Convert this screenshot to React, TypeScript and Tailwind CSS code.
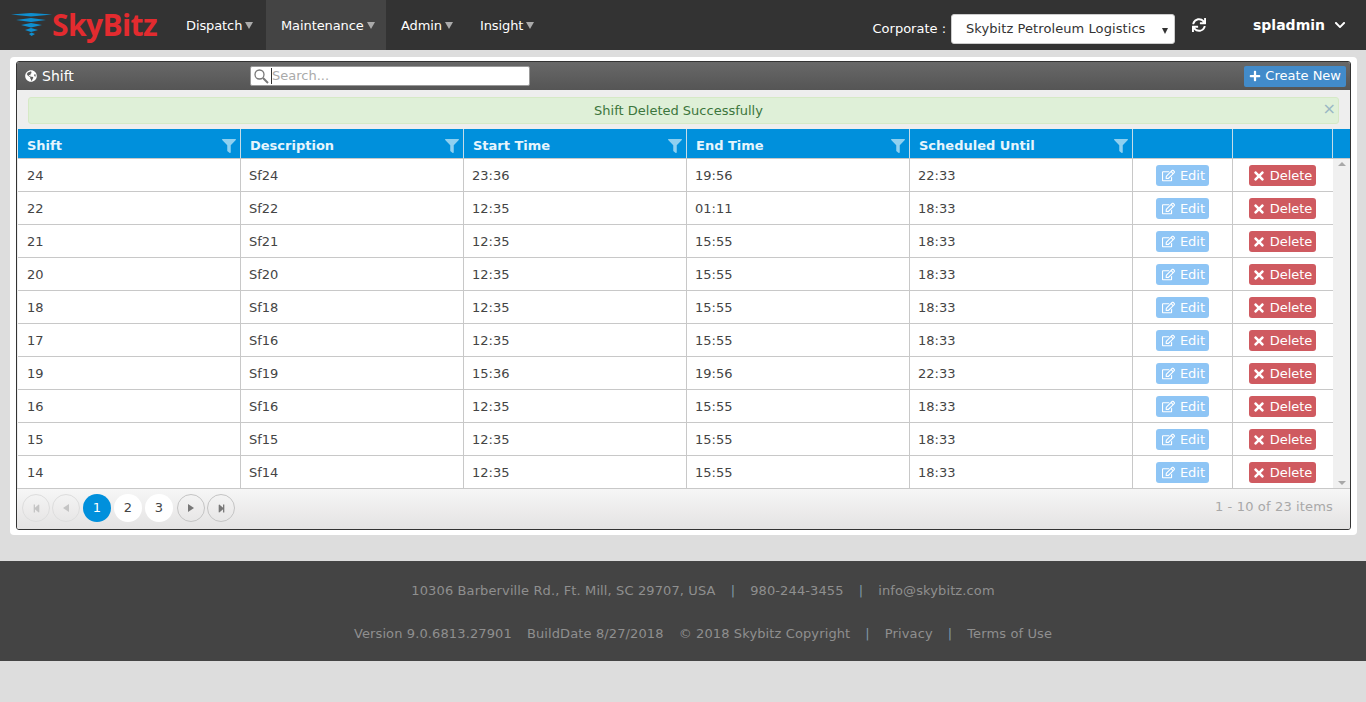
import {
  FaChevronDown,
  FaFilter,
  FaGlobeAmericas,
  FaPlus,
  FaRegEdit,
  FaStepBackward,
  FaStepForward,
  FaSync,
  FaTimes,
} from "react-icons/fa";

const NAV = ["Dispatch", "Maintenance", "Admin", "Insight"];
const HEADERS = ["Shift", "Description", "Start Time", "End Time", "Scheduled Until"];
const ROWS = [
  ["24", "Sf24", "23:36", "19:56", "22:33"],
  ["22", "Sf22", "12:35", "01:11", "18:33"],
  ["21", "Sf21", "12:35", "15:55", "18:33"],
  ["20", "Sf20", "12:35", "15:55", "18:33"],
  ["18", "Sf18", "12:35", "15:55", "18:33"],
  ["17", "Sf16", "12:35", "15:55", "18:33"],
  ["19", "Sf19", "15:36", "19:56", "22:33"],
  ["16", "Sf16", "12:35", "15:55", "18:33"],
  ["15", "Sf15", "12:35", "15:55", "18:33"],
  ["14", "Sf14", "12:35", "15:55", "18:33"],
];

function Logo() {
  return (
    <div className="flex w-[174px] items-center pl-[11px]">
      <svg width="42" height="24" viewBox="0 0 42 24" className="mr-[-1px]">
        <path d="M0 1.5 L20 0 L41 1.5 L20 3.5 Z" fill="#0f8fd0" />
        <path d="M5 7 L20 5 L35 7 L20 9 Z" fill="#0f8fd0" />
        <path d="M10 12 L20 10 L31 12 L20 14.5 Z" fill="#0f8fd0" />
        <path d="M14 17 L20 15 L27 17 L20 19 Z" fill="#0f8fd0" />
        <path d="M18 21 L20.500 19.500 L24 21 L20.500 23 Z" fill="#0f8fd0" />
      </svg>
      <span className="font-['Open_Sans'] text-[30px] leading-none font-bold tracking-[-0.6px] text-[#e32b2f]">
        SkyBitz
      </span>
    </div>
  );
}

function NavBar() {
  return (
    <header className="flex h-[50px] items-stretch bg-[#333333] text-[13px] text-white">
      <Logo />
      {NAV.map((item) => (
        <div
          key={item}
          className={`flex items-center pt-[2px] ${item === "Dispatch" ? "w-[92px] pl-3" : ""} ${item === "Maintenance" ? "w-[120px] bg-[#444444] pl-[15px]" : ""} ${item === "Admin" ? "w-[80px] pl-[15px]" : ""} ${item === "Insight" ? "pl-[14px]" : ""}`}
        >
          <span className="tracking-[-0.1px]">{item}</span>
          <span className="mb-[2px] ml-[3px] h-0 w-0 border-x-[4.500px] border-t-[7px] border-x-transparent border-t-[#aaaaaa]" />
        </div>
      ))}
      <div className="ml-auto flex items-center">
        <span className="mt-[8px] mr-[5px]">Corporate :</span>
        <div className="relative mt-[8px] flex h-[30px] w-[224px] items-center rounded-[3px] border border-[#cccccc] bg-white pl-[14px] tracking-[0.08px] text-[#333333]">
          Skybitz Petroleum Logistics
          <span className="absolute top-[13px] right-[6px] h-0 w-0 border-x-[3.500px] border-t-[6px] border-x-transparent border-t-[#333333]" />
        </div>
        <FaSync className="mr-[47px] ml-[17px] text-[14px]" />
        <span className="mr-[9px] pt-px text-[14px] font-bold">spladmin</span>
        <FaChevronDown className="mr-[20px] text-[12px]" />
      </div>
    </header>
  );
}

function TitleBar() {
  return (
    <div className="flex h-[28px] items-center bg-gradient-to-b from-[#686868] to-[#555555] text-white">
      <FaGlobeAmericas className="ml-[8px] text-[12px]" />
      <span className="ml-[5px] w-[208px] text-[14px]">Shift</span>
      <div className="flex h-[20px] w-[280px] items-center rounded-[2px] border border-[#999999] bg-white pl-[2px] text-[13px] text-[#aaaaaa]">
        <svg width="17" height="17" viewBox="0 0 17 17" fill="none" stroke="#777777">
          <circle cx="6.500" cy="6.500" r="4.500" strokeWidth="1.300" />
          <path d="M10 10 L15 15" strokeWidth="2" />
        </svg>
        <span className="ml-px border-l border-[#333333] leading-[16px]">Search...</span>
      </div>
      <button className="mr-[4px] ml-auto flex h-[21px] items-center rounded-[2px] bg-[#428bca] pr-[5px] pl-[5px] text-[13px] text-white">
        <FaPlus className="mr-[4px] text-[12px]" />
        Create New
      </button>
    </div>
  );
}

function Alert() {
  return (
    <div className="relative mx-[11px] mt-[7px] flex h-[27px] items-center justify-center rounded-[3px] border border-[#d6e9c6] bg-[#dff0d8] pr-[10px] text-[13px] text-[#3c763d]">
      Shift Deleted Successfully
      <span className="absolute top-[3px] right-[2px] text-[16px] leading-none text-[#9ab8c4]">×</span>
    </div>
  );
}

function GridHeader() {
  return (
    <div className="flex h-[29px] bg-[#0090dc] text-[13px] font-bold text-[#e6f5fc]">
      {HEADERS.map((h) => (
        <div key={h} className="flex w-[223px] items-center justify-between border-r border-[#c6dce8] pt-[4px] pr-[4px] pl-[9px]">
          {h}
          <FaFilter className="text-[14px] text-[#8fd0f0]" />
        </div>
      ))}
      <div className="w-[100px] border-r border-[#c6dce8]" />
      <div className="w-[100px] border-r border-[#c6dce8]" />
      <div className="flex-1" />
    </div>
  );
}

function GridRow({ cells }: { cells: string[] }) {
  return (
    <div className="flex h-[33px] border-t border-[#c8c8c8] bg-white text-[13px] text-[#444444]">
      {cells.map((c, i) => (
        <div key={i} className={`flex w-[223px] items-center border-r border-[#c8c8c8] pt-[2px] ${i === 0 ? "pl-[9px]" : "pl-[8px]"}`}>
          {c}
        </div>
      ))}
      <div className="flex w-[100px] items-center justify-center border-r border-[#c8c8c8]">
        <button className="flex h-[21px] w-[53px] items-center justify-center rounded-[3px] bg-[#8ec5f5] pt-px text-white">
          <FaRegEdit className="mr-[5px] ml-[2px] text-[13px]" />
          Edit
        </button>
      </div>
      <div className="flex w-[100px] items-center justify-center pr-[2px]">
        <button className="flex h-[21px] w-[67px] items-center justify-center rounded-[3px] bg-[#cf5a60] pt-px text-white">
          <FaTimes className="mr-[4px] text-[14px]" />
          Delete
        </button>
      </div>
    </div>
  );
}

function Pager() {
  const circle = "flex h-[28px] w-[28px] items-center justify-center rounded-full border border-[#c4c4c4]";
  return (
    <div className="flex h-[41px] items-start border-t border-[#c8c8c8] bg-gradient-to-b from-[#f6f6f6] to-[#e4e3e3] pt-[5px] pr-[17px] pl-[5px] text-[13px]">
      <div className={`${circle} border-[#dddddd] text-[9px] text-[#c4c4c4]`}>
        <FaStepBackward />
      </div>
      <div className={`${circle} ml-[2px] border-[#dddddd]`}>
        <span className="h-0 w-0 border-y-[4.500px] border-r-[6px] border-y-transparent border-r-[#c4c4c4]" />
      </div>
      <div className="ml-[3px] flex h-[28px] w-[28px] items-center justify-center rounded-full bg-[#0090dc] text-white">1</div>
      <div className="ml-[3px] flex h-[28px] w-[28px] items-center justify-center rounded-full bg-white text-[#444444]">2</div>
      <div className="ml-[3px] flex h-[28px] w-[28px] items-center justify-center rounded-full bg-white text-[#444444]">3</div>
      <div className={`${circle} ml-[4px]`}>
        <span className="h-0 w-0 border-y-[4.500px] border-l-[6px] border-y-transparent border-l-[#777777]" />
      </div>
      <div className={`${circle} ml-[2px] text-[9px] text-[#777777]`}>
        <FaStepForward />
      </div>
      <span className="mt-[3px] ml-auto tracking-[0.15px] text-[#a8a8a8]">1 - 10 of 23 items</span>
    </div>
  );
}

function Footer() {
  return (
    <footer className="mt-[26px] flex h-[100px] flex-col items-center bg-[#444444] pl-[40px] text-[13px] tracking-[0.12px] text-[#8f8f8f]">
      <div className="mt-[20px] flex gap-[15px]">
        <span>10306 Barberville Rd., Ft. Mill, SC 29707, USA</span>
        <span className="text-[#7f97a8]">|</span>
        <span>980-244-3455</span>
        <span className="text-[#7f97a8]">|</span>
        <span>info@skybitz.com</span>
      </div>
      <div className="mt-[23px] flex gap-[15px]">
        <span>Version 9.0.6813.27901</span>
        <span>BuildDate 8/27/2018</span>
        <span>© 2018 Skybitz Copyright</span>
        <span className="text-[#7f97a8]">|</span>
        <span>Privacy</span>
        <span className="text-[#7f97a8]">|</span>
        <span>Terms of Use</span>
      </div>
    </footer>
  );
}

export default function App() {
  return (
    <div className="h-[702px] overflow-hidden bg-[#dddddd] font-['DejaVu_Sans',Verdana,sans-serif]">
      <NavBar />
      <main className="mx-[10px] mt-[7px] mr-[9px] rounded-[4px] bg-white px-[6px] pt-[4px] pb-[5px]">
        <div className="overflow-hidden rounded-[3px] border border-[#333333] bg-[#eeeeee]">
          <TitleBar />
          <Alert />
          <div className="mt-[5px] ml-px">
            <GridHeader />
            <div className="flex">
              <div className="w-[1315px]">
                {ROWS.map((r) => (
                  <GridRow key={r[0]} cells={r} />
                ))}
              </div>
              <div className="flex w-[17px] flex-col items-center justify-between border-t border-[#c8c8c8] bg-[#f0f0f0] py-[3px] text-[#a0a0a0]">
                <span className="h-0 w-0 border-x-[4px] border-b-[4px] border-x-transparent border-b-[#a8a8a8]" />
                <span className="h-0 w-0 border-x-[4px] border-t-[4px] border-x-transparent border-t-[#a8a8a8]" />
              </div>
            </div>
          </div>
          <Pager />
        </div>
      </main>
      <Footer />
    </div>
  );
}
